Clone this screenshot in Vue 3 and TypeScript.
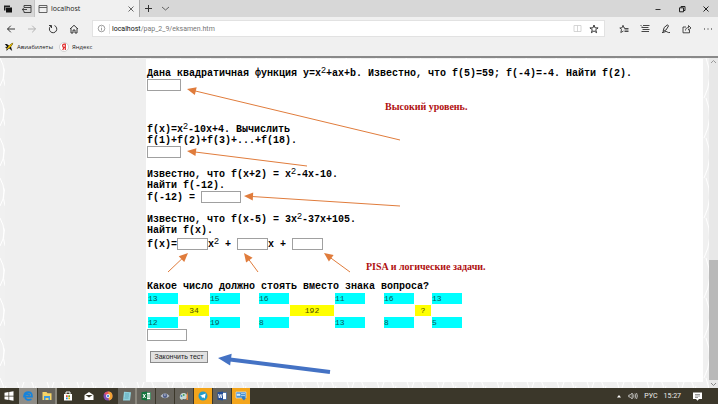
<script setup lang="ts">
import { ref } from 'vue'

interface Arrow {
  from: [number, number]
  to: [number, number]
  bold?: boolean
}

const arrows: Arrow[] = [
  { from: [254, 81], to: [41, 30] },
  { from: [161, 107], to: [41, 92] },
  { from: [254, 147], to: [98, 137] },
  { from: [22, 213], to: [42, 194] },
  { from: [112, 213], to: [98, 194] },
  { from: [204, 213], to: [178, 194] },
  { from: [184, 313], to: [72, 299], bold: true },
]

function direction(a: Arrow) {
  const dx = a.to[0] - a.from[0]
  const dy = a.to[1] - a.from[1]
  const len = Math.hypot(dx, dy)
  return [dx / len, dy / len]
}

function shaft(a: Arrow): string {
  const [ux, uy] = direction(a)
  const back = a.bold ? 10 : 6
  return `M${a.from[0]} ${a.from[1]}L${a.to[0] - ux * back} ${a.to[1] - uy * back}`
}

function head(a: Arrow): string {
  const [ux, uy] = direction(a)
  const len = a.bold ? 13 : 9
  const half = a.bold ? 6 : 4
  const bx = a.to[0] - ux * len
  const by = a.to[1] - uy * len
  return `${a.to[0]},${a.to[1]} ${bx - uy * half},${by + ux * half} ${bx + uy * half},${by - ux * half}`
}

type Cell = { v: string; k: 'c' | 'y' | '' }
const c = (v: string): Cell => ({ v, k: 'c' })
const y = (v: string): Cell => ({ v, k: 'y' })
const e: Cell = { v: '', k: '' }
const rows: Cell[][] = [
  [c('13'), e, c('15'), e, c('16'), e, c('11'), e, c('16'), e, c('13')],
  [e, y('34'), e, e, e, y('192'), e, e, e, y('?'), e],
  [c('12'), e, c('19'), e, c('8'), e, c('13'), e, c('8'), e, c('5')],
]
const columns = ['box', 'box', 'box', 'space', 'box', 'wide', 'box', 'space', 'box', 'narrow', 'box']

const answers = ref<string[]>(['', '', '', '', '', '', ''])
</script>

<template>
  <div class="browser">
    <header>
      <div class="tabs">
        <div class="tab-tools">
          <button aria-label="Вкладки"><svg width="10" height="10" viewBox="0 0 10 10"><path d="M1 1.500h6v1.500h-4.500v3.500H1z" fill="#222" /><path d="M3 3.500h6v5H3z" fill="#111" /></svg></button>
          <button aria-label="Отложить вкладки"><svg width="11" height="10" viewBox="0 0 11 10"><path d="M3 3V1.500h7v7H3V7M3 3.500h7M1 5.500h5M3 3.800 1.200 5.500 3 7.200" fill="none" stroke="#444" /></svg></button>
        </div>
        <div class="tab">
          <svg width="10" height="10" viewBox="0 0 10 10"><path d="M1 1.500h8v7H1zM1 3.500h8" fill="none" stroke="#555" stroke-width=".9" /></svg>
          <span>localhost</span>
          <button aria-label="Закрыть вкладку"><svg width="8" height="8" viewBox="0 0 8 8"><path d="m1.500 1.500 5 5m0-5-5 5" stroke="#444" stroke-width=".8" /></svg></button>
        </div>
        <div class="tab-actions">
          <button aria-label="Новая вкладка"><svg width="9" height="9" viewBox="0 0 9 9"><path d="M4.500 1v7M1 4.500h7" stroke="#333" /></svg></button>
          <button aria-label="Список вкладок"><svg width="9" height="9" viewBox="0 0 9 9"><path d="m1 3 3.500 3L8 3" fill="none" stroke="#555" stroke-width=".9" /></svg></button>
        </div>
        <div class="window-actions">
          <button aria-label="Свернуть"><svg width="8" height="8" viewBox="0 0 8 8"><path d="M1.500 4.500h5" stroke="#333" /></svg></button>
          <button aria-label="Развернуть"><svg width="8" height="8" viewBox="0 0 8 8"><path d="M1.500 2.800h4v4h-4zM3 2.500v-1h4v4H6" fill="none" stroke="#222" /></svg></button>
          <button aria-label="Закрыть"><svg width="8" height="8" viewBox="0 0 8 8"><path d="m1.500 1.500 5 5m0-5-5 5" stroke="#222" /></svg></button>
        </div>
      </div>
      <nav class="toolbar">
        <div class="nav">
          <button aria-label="Назад"><svg width="10" height="10" viewBox="0 0 10 10"><path d="M9 5H1.500M4.800 1.700 1.500 5l3.300 3.300" fill="none" stroke="#222" stroke-width=".9" /></svg></button>
          <button aria-label="Вперёд"><svg width="10" height="10" viewBox="0 0 10 10"><path d="M1 5h7.500M5.200 1.700 8.500 5 5.200 8.300" fill="none" stroke="#aaa" stroke-width=".9" /></svg></button>
          <button aria-label="Обновить"><svg width="10" height="10" viewBox="0 0 10 10"><path d="M6.500 1.600A3.700 3.700 0 1 1 2.800 2.100M1 1.500h2.500V4" fill="none" stroke="#222" stroke-width=".9" /></svg></button>
          <button aria-label="Домой"><svg width="10" height="10" viewBox="0 0 10 10"><path d="M1 5 5 1.300 9 5M2 4.300V9h2V6h2v3h2V4.300" fill="none" stroke="#222" stroke-width=".9" /></svg></button>
        </div>
        <div class="address">
          <svg width="9" height="9" viewBox="0 0 9 9"><circle cx="4.500" cy="4.500" r="3.300" fill="none" stroke="#777" stroke-width=".7" /><path d="M4.500 4v2.500M4.500 2.500v.8" stroke="#777" stroke-width=".7" /></svg>
          <span class="url"><b>localhost</b>/pap_2_9/eksamen.htm</span>
          <button aria-label="Режим чтения"><svg width="9" height="9" viewBox="0 0 9 9"><path d="M1 1.500h7v6H1zM4.500 1.500v6.500" fill="none" stroke="#ccc" stroke-width=".8" /></svg></button>
          <button aria-label="В избранное"><svg width="10" height="10" viewBox="0 0 10 10"><path d="m5 1 1.100 2.900h3L6.700 5.700l.9 3L5 6.900 2.400 8.700l.9-3L.9 3.900h3z" fill="none" stroke="#222" stroke-width=".9" /></svg></button>
        </div>
        <div class="menu">
          <button aria-label="Избранное"><svg width="10" height="10" viewBox="0 0 10 10"><path d="M6 4 5 3.900 4 1.300 3 3.900H.8L2.500 5.600l-.7 2.900L4.500 7M5.500 4.500h4M5.500 6h4M5.500 7.500h4" fill="none" stroke="#222" stroke-width=".8" /></svg></button>
          <button aria-label="Центр"><svg width="10" height="10" viewBox="0 0 10 10"><path d="M.5 1 2 2.500M3 1.500h6.500M1.500 3.500h7M2.500 5.500h7M1.500 7.500h7.500" fill="none" stroke="#333" stroke-width=".9" /></svg></button>
          <button aria-label="Заметки"><svg width="10" height="10" viewBox="0 0 10 10"><path d="M1 8.500c2 .5 2.500-1 4-1s1.500 1.500 4 1M2 7.500l1.200-4L6.500.8l1 1.200L5 6z" fill="none" stroke="#222" stroke-width=".9" /></svg></button>
          <button aria-label="Поделиться"><svg width="10" height="10" viewBox="0 0 10 10"><path d="M4 3H1v5.800h6.500V6M3.500 6.500C3.500 4.500 5 3.500 6.500 3.500V1.500L9 4 6.500 6V4.700" fill="none" stroke="#222" stroke-width=".8" /></svg></button>
          <button aria-label="Ещё"><svg width="10" height="10" viewBox="0 0 10 10"><path d="M1 5h1M4.500 5h1M8 5h1" stroke="#222" /></svg></button>
        </div>
      </nav>
      <div class="favorites">
        <a href="#"><svg width="10" height="10" viewBox="0 0 10 10"><path d="M.8 2h2L5 3.500 8.500.8 9.200 1.500 7 4.800 8.200 9 5 6.300 2.500 9V6L.8 5l2.400-.2z" fill="#111" /><path d="m2 8 3-4.500L9.500.5 6.500 5z" fill="#f2c500" /></svg>Авиабилеты</a>
        <a href="#"><svg width="10" height="10" viewBox="0 0 10 10"><circle cx="5" cy="5" r="4.500" fill="#fff" stroke="#bbb" stroke-width=".6" /><path d="M6.300 8V2.200H5.200a1.600 1.600 0 0 0 0 3.200h1.100M5 5.400 3.700 8" fill="none" stroke="#e02a2a" stroke-width="1.200" /></svg>Яндекс</a>
      </div>
    </header>

    <div class="viewport">
      <svg class="pattern"><defs><pattern id="leaf" width="30" height="40" patternUnits="userSpaceOnUse"><path d="M0 0q8 14 0 28M6 8Q0 20 8 34M16 0q8 20-2 40M24 4q-8 16 4 30" fill="none" stroke="#fff" /></pattern></defs><rect width="100%" height="100%" fill="url(#leaf)" /></svg>
      <aside></aside>
      <main>
        <section class="q1">
          <label for="a0">Дана квадратичная функция y=x<sup>2</sup>+ax+b. Известно, что f(5)=59; f(-4)=-4. Найти f(2).</label>
          <input id="a0" v-model="answers[0]" class="short" type="text">
        </section>
        <section class="q2">
          <label for="a1">f(x)=x<sup>2</sup>-10x+4. Вычислить<br>f(1)+f(2)+f(3)+...+f(18).</label>
          <input id="a1" v-model="answers[1]" class="short" type="text">
        </section>
        <section class="q3">
          <p>Известно, что f(x+2) = x<sup>2</sup>-4x-10.<br>Найти f(-12).</p>
          <div class="formula"><label for="a2">f(-12) = </label><input id="a2" v-model="answers[2]" class="long" type="text"></div>
        </section>
        <section class="q4">
          <p>Известно, что f(x-5) = 3x<sup>2</sup>-37x+105.<br>Найти f(x).</p>
          <div class="formula spaced">
            <label for="a3">f(x)=</label><input id="a3" v-model="answers[3]" class="coef" type="text">
            <label for="a4">x<sup>2</sup> + </label><input id="a4" v-model="answers[4]" class="coef" type="text">
            <label for="a5">x + </label><input id="a5" v-model="answers[5]" class="coef" type="text">
          </div>
        </section>
        <section class="q5">
          <label for="a6">Какое число должно стоять вместо знака вопроса?</label>
          <table>
            <colgroup><col v-for="(w, i) in columns" :key="i" :class="w"></colgroup>
            <tbody>
              <tr v-for="(row, i) in rows" :key="i">
                <td v-for="(cell, j) in row" :key="j" :class="{ cyan: cell.k === 'c', yellow: cell.k === 'y' }">{{ cell.v }}</td>
              </tr>
            </tbody>
          </table>
          <input id="a6" v-model="answers[6]" class="long" type="text">
        </section>
        <button class="finish" type="button">Закончить тест</button>

        <strong class="note high">Высокий уровень.</strong>
        <strong class="note pisa">PISA и логические задачи.</strong>
        <svg class="arrows" width="300" height="320" viewBox="0 0 300 320" aria-hidden="true">
          <g v-for="(a, i) in arrows" :key="i" :class="{ bold: a.bold }">
            <path :d="shaft(a)" />
            <polygon :points="head(a)" />
          </g>
        </svg>
      </main>
      <div class="scrollbar">
        <svg width="9" height="8" viewBox="0 0 9 8"><path d="m2 5 2.500-2.500L7 5" fill="none" stroke="#999" /></svg>
        <div class="track"></div>
        <div class="thumb"></div>
        <svg width="9" height="8" viewBox="0 0 9 8"><path d="m2 3 2.500 2.500L7 3" fill="none" stroke="#888" /></svg>
      </div>
    </div>

    <footer>
      <div class="apps">
        <button aria-label="Пуск"><svg width="10" height="10" viewBox="0 0 10 10"><path d="M.5 1.700 4.500 1v3.700h-4zM5.200.9 9.500.3v4.400H5.200zM.5 5.400h4V9l-4-.7zM5.200 5.400h4.300v4.300l-4.300-.6z" fill="#fff" /></svg></button>
        <button class="active" aria-label="Edge"><svg width="10" height="10" viewBox="0 0 10 10"><path d="M8.500 8.200C4.500 10 2 8 2 5.700h7C9 2.500 7.500 1.200 5.300 1.200 3 1.200 1.500 2.500 1.200 4.500 3 2.500 6.300 2.700 6.300 4.500" fill="none" stroke="#1583dc" stroke-width="1.700" /></svg></button>
        <button class="open stack" aria-label="Проводник"><svg width="10" height="10" viewBox="0 0 10 10"><path d="M.5 1h4l1 1.200h4V9h-9z" fill="#f5d467" /><path d="M2 5h6v4H6.500V7h-3v2H2z" fill="#3c9be0" /></svg></button>
        <button class="first" aria-label="Магазин"><svg width="10" height="10" viewBox="0 0 10 10"><path d="M3 3V1h4v2" fill="none" stroke="#fff" /><path d="M1 3h8v6.500H1z" fill="#fff" /><path d="M3 4.300h1.700V6H3z" fill="#e64b2e" /><path d="M5.300 4.300H7V6H5.300z" fill="#68a923" /><path d="M3 6.500h1.700v1.700H3z" fill="#218ad8" /><path d="M5.300 6.500H7v1.700H5.300z" fill="#edb900" /></svg></button>
        <button aria-label="Почта"><svg width="10" height="10" viewBox="0 0 10 10"><path d="M.5 4 5 1l4.500 3v5h-9z" fill="#fff" /><path d="M1.500 4h7L5 6.500z" fill="#3b372a" /></svg></button>
        <button aria-label="Браузер"><svg width="10" height="10" viewBox="0 0 10 10"><circle cx="5" cy="5" r="4.500" fill="#8350b5" /><path d="M5 .5A4.500 4.500 0 0 1 6 9.400L5 5z" fill="#f4a432" /><path d="M1 3A4.500 4.500 0 0 1 5 .5l1 4z" fill="#e95263" /><circle cx="5" cy="5" r="2" fill="#fff" /><circle cx="5" cy="5" r="1.200" fill="#4c8fe0" /></svg></button>
        <button class="open stack" aria-label="Блокнот"><svg width="10" height="10" viewBox="0 0 10 10"><path d="m2 .8 7 .4-1 8.300H1z" fill="#8fd1dd" /><path d="M3 3h4M3 5h4M2.500 7h4" stroke="#4b98ad" stroke-width=".7" /></svg></button>
        <button class="open" aria-label="Excel"><svg width="10" height="10" viewBox="0 0 10 10"><path d="M5 1.500h4.500v7H5z" fill="#fff" stroke="#21854c" stroke-width=".7" /><path d="M.5 1.300 6 .5v9L.5 8.700z" fill="#13743d" /><path d="m2 3 2.500 4m0-4L2 7" stroke="#fff" /><path d="M6 4h3M6 6h3" stroke="#21854c" stroke-width=".7" /></svg></button>
        <button class="open" aria-label="Просмотр"><svg width="10" height="10" viewBox="0 0 10 10"><path d="M.5 5Q5-.5 9.500 5 5 9.500.5 5" fill="#b9c0cc" /><circle cx="5" cy="4.800" r="2.200" fill="#54618a" /><path d="M4.300 4h1.200" stroke="#fff" /></svg></button>
        <button class="open" aria-label="Paint"><svg width="10" height="10" viewBox="0 0 10 10"><path d="M4.500 2C1 2-.5 7 2 8.500c1.500.8 1.500-1 3-.5C8 9 9 6 8 4 7.300 2.500 6 2 4.500 2" fill="#c5d8d5" /><circle cx="2.500" cy="5" r=".9" fill="#4187bd" /><circle cx="4.700" cy="4" r=".9" fill="#49a34b" /><path d="M8.500.5 7.500 5v4h1.500V5z" fill="#ec8033" /></svg></button>
        <button class="alert" aria-label="Telegram"><svg width="10" height="10" viewBox="0 0 10 10"><circle cx="5" cy="5" r="4.500" fill="#239bc9" /><path d="m2 4.800 5.700-2.300-1 5L5 6.200l-1 .9-.3-1.700z" fill="#fff" /></svg></button>
        <button class="open" aria-label="Word"><svg width="10" height="10" viewBox="0 0 10 10"><path d="M5 1.500h4.500v7H5z" fill="#fff" stroke="#2b579a" stroke-width=".7" /><path d="M.5 1.300 6 .5v9L.5 8.700z" fill="#234d98" /><path d="m1.500 3 .8 4 1-3.500 1 3.500.8-4" fill="none" stroke="#fff" stroke-width=".8" /></svg></button>
        <button class="alert" aria-label="Панель управления"><svg width="12" height="10" viewBox="0 0 12 10"><path d="M1 1h10v6H1z" fill="#4b91cd" stroke="#e4eff6" stroke-width=".6" /><path d="M2 3h3v1.500H2zM6 2.500h4M6 4.500h4" fill="#d9edfa" stroke="#d9edfa" stroke-width=".6" /><path d="m8 5 3 2-2 2.500L6.500 7z" fill="#317cc0" /></svg></button>
      </div>
      <div class="tray">
        <svg width="6" height="6" viewBox="0 0 6 6"><path d="m1 4.500 2-2.500 2 2.500z" fill="#fff" /></svg>
        <svg width="10" height="8" viewBox="0 0 10 8"><path d="M.8 3h1.500L4.200 1v6L2.300 5H.8zM5.500 2.500q1 1.500 0 3M7 1.500q1.500 2.500 0 5M8.500 1q1.800 3 0 6" fill="none" stroke="#eee" stroke-width=".7" /></svg>
        <span>РУС</span>
        <span class="clock">15:27</span>
        <svg width="9" height="9" viewBox="0 0 9 9"><path d="M0 .5h9v6.500H6L4.500 8.800 3 7H0z" fill="#fff" /><path d="M2 2.500h5M2 4h5M2 5.500h3" stroke="#555" stroke-width=".6" /></svg>
      </div>
    </footer>
  </div>
</template>

<style>
body {
  margin: 0;
}
</style>

<style scoped>
* {
  box-sizing: border-box;
}
.browser {
  display: flex;
  flex-direction: column;
  min-height: 100vh;
  font: 7px/10px "Open Sans", sans-serif;
  color: #222;
  background: #f0f0f0;
}
button {
  display: flex;
  align-items: center;
  justify-content: center;
  padding: 0;
  border: 0;
  background: none;
}
svg {
  display: block;
  flex: none;
}
header {
  border-bottom: 2px solid #898989;
}
.tabs {
  display: flex;
  height: 17px;
  background: #d7d7d7;
}
.tab-tools {
  display: flex;
  align-items: center;
  gap: 8px;
  width: 34px;
  padding-left: 3px;
}
.tab {
  display: flex;
  align-items: center;
  gap: 3px;
  width: 106px;
  padding: 0 4px 0 3px;
  background: #f0f0f0;
  border-left: 1px solid #c4c4c4;
  border-right: 1px solid #aaa;
}
.tab span {
  flex: 1;
}
.tab-actions {
  display: flex;
  flex: 1;
  gap: 8px;
  padding-left: 4px;
}
.window-actions {
  display: flex;
  gap: 16px;
  padding-right: 8px;
}
.toolbar {
  display: flex;
  align-items: center;
  height: 21px;
  padding-top: 2px;
}
.nav {
  display: flex;
  gap: 11px;
  width: 92px;
  padding-left: 6px;
}
.address {
  display: flex;
  flex: 1;
  align-items: center;
  gap: 7px;
  height: 17px;
  padding: 0 5px 0 4px;
  background: #fff;
  border: 1px solid #e2e2e2;
}
.address svg + .url {
  margin-left: -4px;
}
.url {
  flex: 1;
  padding-left: 2px;
  border-left: 1px solid #e2e2e2;
  color: #777;
  font-family: Roboto, sans-serif;
}
.url b {
  font-weight: 400;
  color: #111;
}
.menu {
  display: flex;
  gap: 11px;
  padding: 0 5px 0 14px;
}
.favorites {
  display: flex;
  align-items: center;
  gap: 6px;
  height: 18px;
  padding-left: 4px;
  font-size: 6px;
}
.favorites a {
  display: flex;
  align-items: center;
  gap: 3px;
  color: #222;
  text-decoration: none;
}
.viewport {
  position: relative;
  display: flex;
  flex: 1;
}
.pattern {
  position: absolute;
  width: 100%;
  height: 100%;
}
aside {
  position: relative;
  width: 141px;
  margin: 1px 0 6px 5px;
  background: #efefef;
}
main {
  position: relative;
  flex: 1;
  margin: 1px 6px 6px 0;
  padding: 9px 0 19px 1px;
  background: #fff;
  color: #000;
  font: bold 10px/11px "Liberation Mono", monospace;
}
section {
  display: flex;
  flex-direction: column;
  align-items: flex-start;
}
p {
  margin: 0;
}
label {
  white-space: pre;
}
sup {
  font: 9px/1 "Liberation Sans", sans-serif;
  vertical-align: 3px;
  line-height: 0;
}
input {
  height: 12px;
  padding: 0 2px;
  border: 1px solid #a0a0a0;
  background: #fff;
  font: 8px/10px "Liberation Sans", sans-serif;
}
.short {
  width: 34px;
}
.long {
  width: 40px;
}
.coef {
  width: 31px;
}
.q2 {
  margin-top: 33px;
}
.q3,
.q4 {
  margin-top: 11px;
}
.q5 {
  margin-top: 31px;
}
.formula {
  display: flex;
  align-items: center;
}
.spaced {
  margin-top: 2px;
}
table {
  table-layout: fixed;
  width: 316px;
  border-collapse: separate;
  border-spacing: 1px;
  font: 8px/11px "Liberation Mono", monospace;
}
.box {
  width: 30px;
}
.space {
  width: 17px;
}
.wide {
  width: 44px;
}
.narrow {
  width: 16px;
}
td {
  height: 11px;
  padding: 0;
}
.cyan {
  background: #0ff;
  color: #075d5d;
}
.yellow {
  background: #ff0;
  color: #4f4f00;
  text-align: center;
}
.finish {
  width: 58px;
  height: 12px;
  margin: 10px 0 0 3px;
  border: 1px solid #8a8a8a;
  background: #e1e1e1;
  color: #222;
  font: 7px/10px "Liberation Sans", sans-serif;
}
.note {
  position: absolute;
  color: #b01010;
  font: bold 10px/12px "Liberation Serif", serif;
  white-space: nowrap;
}
.high {
  top: 42px;
  left: 239px;
}
.pisa {
  top: 202px;
  left: 220px;
}
.arrows {
  position: absolute;
  top: 0;
  left: 0;
  pointer-events: none;
}
.arrows path {
  fill: none;
  stroke: #e07c3c;
}
.arrows polygon {
  fill: #e07c3c;
}
.arrows .bold path {
  stroke: #4472c4;
  stroke-width: 4;
}
.arrows .bold polygon {
  fill: #4472c4;
}
.scrollbar {
  position: relative;
  display: flex;
  flex-direction: column;
  width: 9px;
  background: #e8e8e8;
}
.track {
  flex: 194;
}
.thumb {
  flex: 120;
  background: #b9b9b9;
}
footer {
  display: flex;
  justify-content: space-between;
  height: 16px;
  background: #3b372a;
  color: #eee;
}
.apps {
  display: flex;
}
.apps button {
  width: 19px;
  border-right: 1px solid #3b372a;
}
.apps .active {
  background: #8f8d87;
}
.apps .open {
  background: #66635b;
}
.apps .stack {
  border-right: 2px solid #8a877d;
}
.apps .first {
  width: 23px;
}
.apps .alert {
  background: #f3a51c;
}
.tray {
  display: flex;
  align-items: center;
  gap: 6px;
  padding-right: 16px;
  font-family: Roboto, sans-serif;
}
.clock {
  padding-right: 6px;
}
</style>
